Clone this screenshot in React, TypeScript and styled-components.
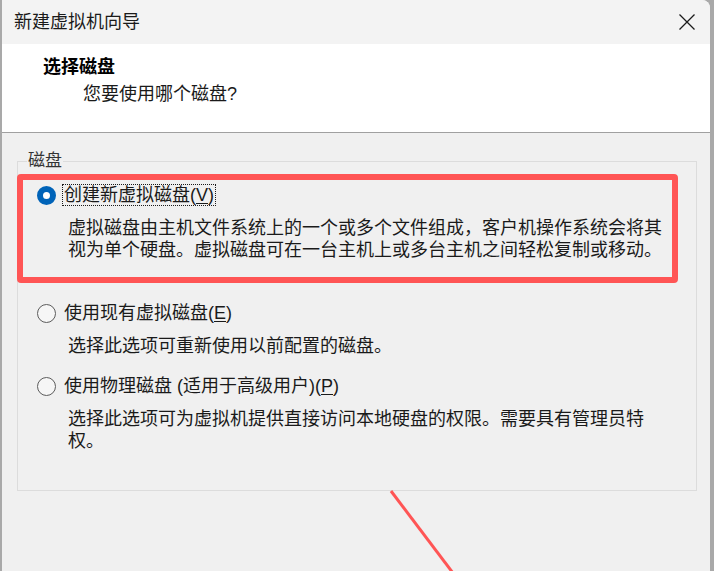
import React from "react";
import styled, { createGlobalStyle } from "styled-components";

const FONT = `"Liberation Sans", "Noto Sans CJK SC", sans-serif`;

const GlobalStyle = createGlobalStyle`
  html, body {
    margin: 0;
    padding: 0;
    background-color: #a9a9a9;
    overflow: hidden;
  }
`;

interface DiskOption {
  id: string;
  label: string;
  mnemonic: string;
  lines: string[];
  checked: boolean;
  spacing: number;
}

const options: DiskOption[] = [
  {
    id: "new",
    label: "创建新虚拟磁盘",
    mnemonic: "V",
    lines: [
      "虚拟磁盘由主机文件系统上的一个或多个文件组成，客户机操作系统会将其",
      "视为单个硬盘。虚拟磁盘可在一台主机上或多台主机之间轻松复制或移动。",
    ],
    checked: true,
    spacing: 0,
  },
  {
    id: "existing",
    label: "使用现有虚拟磁盘",
    mnemonic: "E",
    lines: ["选择此选项可重新使用以前配置的磁盘。"],
    checked: false,
    spacing: 41,
  },
  {
    id: "physical",
    label: "使用物理磁盘 (适用于高级用户)",
    mnemonic: "P",
    lines: [
      "选择此选项可为虚拟机提供直接访问本地硬盘的权限。需要具有管理员特",
      "权。",
    ],
    checked: false,
    spacing: 18,
  },
];

export default function App() {
  return (
    <>
      <GlobalStyle />
      <Window>
        <TitleBar>
          <WindowTitle>新建虚拟机向导</WindowTitle>
          <CloseButton aria-label="close">
            <svg width="16" height="16" viewBox="0 0 16 16">
              <path
                d="M0.5 0.5 L15.5 15.5 M15.5 0.5 L0.5 15.5"
                stroke="#1b1b1b"
                strokeWidth="1.3"
                fill="none"
              />
            </svg>
          </CloseButton>
        </TitleBar>
        <Header>
          <Heading>选择磁盘</Heading>
          <SubHeading>您要使用哪个磁盘?</SubHeading>
        </Header>
        <Body>
          <GroupBox>
            <Legend>磁盘</Legend>
            {options.map((opt) => (
              <Option key={opt.id} $spacing={opt.spacing}>
                {opt.checked ? <Highlight /> : null}
                <OptionRow>
                  <Radio $checked={opt.checked} />
                  <OptionLabel $focused={opt.checked}>
                    {opt.label}(<u>{opt.mnemonic}</u>)
                  </OptionLabel>
                </OptionRow>
                <Description>
                  {opt.lines.map((line) => (
                    <DescLine key={line}>{line}</DescLine>
                  ))}
                </Description>
              </Option>
            ))}
          </GroupBox>
        </Body>
        <Arrow width="714" height="571" viewBox="0 0 714 571">
          <line
            x1="391"
            y1="491"
            x2="456"
            y2="577"
            stroke="#ff5555"
            strokeWidth="3"
          />
        </Arrow>
      </Window>
    </>
  );
}

const Window = styled.div`
  position: relative;
  display: flex;
  flex-direction: column;
  margin-left: 2px;
  width: 708px;
  height: 571px;
  background-color: #f0f0f0;
  border-top-right-radius: 8px;
  overflow: hidden;
  font-family: ${FONT};
  color: #1a1a1a;
`;

const TitleBar = styled.div`
  display: flex;
  align-items: center;
  justify-content: space-between;
  height: 44px;
  padding-left: 12px;
  background-color: #f3f3f3;
`;

const WindowTitle = styled.div`
  font-size: 18px;
  line-height: 22px;
  color: #1a1a1a;
`;

const CloseButton = styled.button`
  display: flex;
  align-items: center;
  justify-content: center;
  width: 46px;
  height: 44px;
  padding: 0;
  border: none;
  background: transparent;
`;

const Header = styled.div`
  display: flex;
  flex-direction: column;
  gap: 5px;
  height: 89px;
  box-sizing: border-box;
  padding: 12px 0 0 41px;
  background-color: #ffffff;
  border-bottom: 1px solid #a0a0a0;
`;

const Heading = styled.div`
  font-size: 18px;
  line-height: 22px;
  font-weight: 700;
  color: #000;
`;

const SubHeading = styled.div`
  font-size: 18px;
  line-height: 22px;
  padding-left: 40px;
  color: #1a1a1a;
`;

const Body = styled.div`
  flex: 1;
  padding: 19px 13px 0 15px;
`;

const GroupBox = styled.fieldset`
  margin: 0;
  padding: 14px 19px 38px 19px;
  border: 1px solid #dcdcdc;
  min-width: 0;
`;

const Legend = styled.legend`
  margin-left: -10px;
  padding: 0 1px;
  font-size: 17px;
  line-height: 18px;
  color: #333;
`;

const Option = styled.div<{ $spacing: number }>`
  position: relative;
  display: flex;
  flex-direction: column;
  gap: 11px;
  margin-top: ${(p) => p.$spacing}px;
`;

const Highlight = styled.div`
  position: absolute;
  left: -20px;
  top: -10px;
  width: 661px;
  height: 109px;
  box-sizing: border-box;
  border: 6px solid #ff5555;
  border-radius: 4px;
  pointer-events: none;
`;

const OptionRow = styled.div`
  display: flex;
  align-items: center;
  gap: 6px;
  height: 22px;
`;

const Radio = styled.span<{ $checked: boolean }>`
  width: 19px;
  height: 19px;
  box-sizing: border-box;
  border-radius: 50%;
  flex-shrink: 0;
  border: ${(p) => (p.$checked ? "6px solid #0063b8" : "1px solid #5c5c5c")};
  background-color: ${(p) => (p.$checked ? "#ffffff" : "#f6f6f6")};
`;

const OptionLabel = styled.span<{ $focused: boolean }>`
  font-size: 18px;
  line-height: 20px;
  padding: 0 1px;
  border: 1px ${(p) => (p.$focused ? "dotted #1a1a1a" : "solid transparent")};
  u {
    text-decoration-thickness: 1px;
    text-underline-offset: 2px;
  }
`;

const Description = styled.div`
  padding-left: 31px;
`;

const DescLine = styled.div`
  font-size: 18px;
  line-height: 22px;
  white-space: nowrap;
  color: #1a1a1a;
`;

const Arrow = styled.svg`
  position: absolute;
  left: -2px;
  top: 0;
  pointer-events: none;
`;
